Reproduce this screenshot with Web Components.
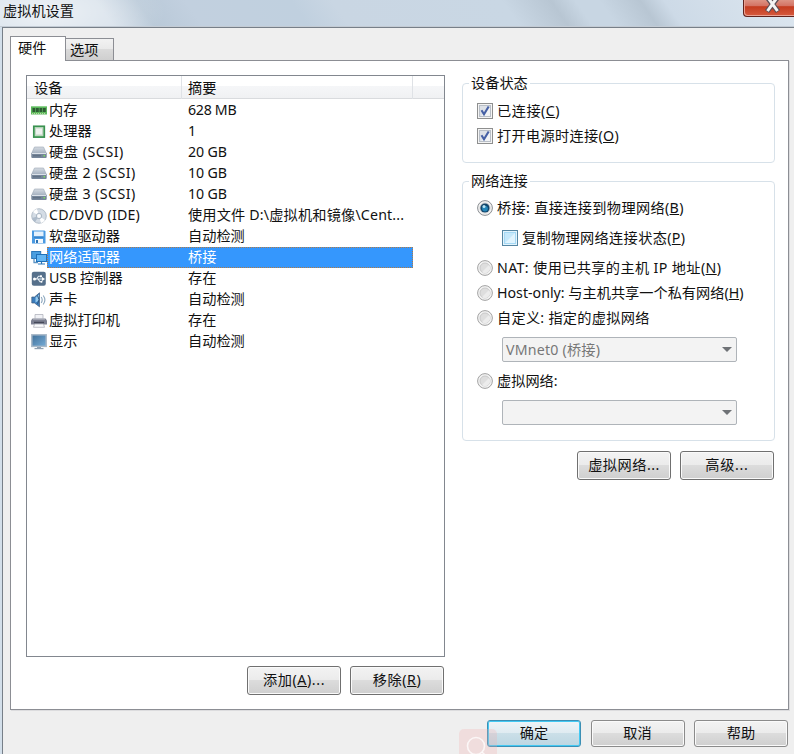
<!DOCTYPE html>
<html lang="zh-CN">
<head>
<meta charset="utf-8">
<title>虚拟机设置</title>
<style>
html,body{margin:0;width:794px;height:754px;overflow:hidden}
body{font:14.2px/20px "Noto Sans","Noto Sans CJK SC",sans-serif;color:#111}
</style>
</head>
<body>
<vm-window></vm-window>
<script>
const define = (name, html, setup) => customElements.define(name, class extends HTMLElement {
  constructor() {
    super();
    this.attachShadow({mode: 'open'});
  }
  connectedCallback() {
    if (this.shadowRoot.childNodes.length) return;
    this.shadowRoot.innerHTML = html;
    if (setup) setup(this, this.shadowRoot);
  }
});

const ICONS = {
  memory: '<rect x="0" y="3" width="16" height="8.500" fill="#5cb85c"/><path d="M0 3h16v1H0z" fill="#8fd28f"/><path d="M1.500 5h2.800v4H1.500zM5 5h2.800v4H5zM8.500 5h2.800v4H8.500zM12 5h2.800v4H12z" fill="#2d5a33"/><path d="M1 10.500h14" stroke="#b9d9a0" stroke-dasharray="1 1"/>',
  cpu: '<rect x="2.800" y="2.300" width="10.500" height="10.800" fill="#b5e0b5" stroke="#3a9150" stroke-width="1.700"/><rect x="4.500" y="4" width="7" height="7" fill="#eef2ee" stroke="#c3d4c5"/>',
  disk: '<defs><linearGradient id="g" x2="0" y2="1"><stop stop-color="#d6dce3"/><stop offset="1" stop-color="#a3afbe"/></linearGradient></defs><path d="M3.500 2h9L15.500 8.500H.5z" fill="url(#g)" stroke="#9aa6b4" stroke-width=".6"/><rect x=".3" y="8" width="15.400" height="5" rx="1" fill="#76869a"/><path d="M1 8.500h14" stroke="#dce2e9"/><path d="M2 10.800h8" stroke="#5b6a7c"/><rect x="12.500" y="10" width="1.500" height="1.500" fill="#7be05a"/>',
  cd: '<circle cx="8" cy="8" r="7.300" fill="#d4dce5" stroke="#a6b2bf" stroke-width=".8"/><path d="M8 8 2 4a7 7 0 0 1 4-3zM8 8l6 4a7 7 0 0 1-4 3z" fill="#fff"/><path d="M8 8 1 10a7 7 0 0 0 3 4z" fill="#aebccb"/><circle cx="8" cy="8" r="2.700" fill="#eef2f6" stroke="#9dabba" stroke-width=".8"/><circle cx="8" cy="8" r="1" fill="#fff"/>',
  floppy: '<path d="M1 1.500h12.500L14.500 2.500v12H1z" fill="#4a9ae2"/><rect x="3" y="2.500" width="9.500" height="5" fill="#e4f1fd"/><path d="M3 7.500h9.500v1H3z" fill="#2273bd"/><rect x="4" y="10" width="8" height="4" fill="#f4f8fc"/><rect x="5" y="11" width="2" height="3" fill="#2c72b2"/>',
  net: '<rect x=".7" y="1.500" width="9" height="7" fill="#4b9fe0" stroke="#2a76b8"/><path d="M3 8.500v4h4" stroke="#5c94c4" stroke-width="1.300" fill="none"/><rect x="5.500" y="4.500" width="10" height="7" fill="#62b5f3" stroke="#1f70b8"/><path d="M10.500 12v2M7 14h7" stroke="#2b78bd" stroke-width="1.200"/>',
  usb: '<rect x=".8" y=".8" width="14" height="14" rx="2" fill="#56708b"/><path d="M3 8h9M5.500 8l2-2.800h2M7 8l2 2.800h1.500" fill="none" stroke="#e8eff6" stroke-width="1.100"/><circle cx="3.500" cy="8" r="1.500" fill="#fff"/><path d="M11 6l3 2-3 2z" fill="#fff"/><rect x="9" y="4.300" width="2" height="2" fill="#fff"/><circle cx="10.500" cy="10.800" r="1" fill="#fff"/>',
  sound: '<path d="M.8 5h2.700L8.500.8v14L3.500 11H.8z" fill="#3b7dbd" stroke="#3f5c7c" stroke-width=".7"/><path d="M4.500 5.500 8 2.500v6l-3.500 2z" fill="#93caf0"/><path d="M6.500 3.500q3 4 0 8.500" fill="none" stroke="#2c5680" stroke-width="1"/><path d="M10.200 5q2 3 0 6M12.200 3.500q3.400 4.500 0 9" fill="none" stroke="#8ba6bd" stroke-width="1.100"/>',
  printer: '<path d="M4 1.500h8V7H4z" fill="#f0f1f5" stroke="#a8abb5" stroke-width=".7"/><path d="M1.500 5.500h13L16 7.500V11.500H0V7.500z" fill="#7c8091"/><path d="M2 6h12" stroke="#c1c4cd"/><path d="M3 9.500h10" stroke="#454959" stroke-width="1.500"/><path d="M3.500 11h9l1 3.300h-11z" fill="#fafbfc" stroke="#a5a8b2" stroke-width=".7"/>',
  display: '<defs><linearGradient id="s" x2="1" y2="1"><stop stop-color="#3f6f98"/><stop offset="1" stop-color="#78aed8"/></linearGradient></defs><rect x=".8" y=".8" width="14.400" height="11.600" fill="url(#s)" stroke="#a9b9c8" stroke-width="1.500"/><path d="M6 13h4v1.500H6z" fill="#8da0b3"/><path d="M3.500 14.600h9" stroke="#8fa0b0" stroke-width="1.200"/>'
};

define('vm-icon', `<style>:host{display:block;width:16px;height:16px;flex:none}svg{display:block}</style><svg width="16" height="16" viewBox="0 0 16 16"></svg>`,
  (h, r) => r.querySelector('svg').innerHTML = ICONS[h.getAttribute('name')]);

define('vm-button', `<style>
:host{display:flex;box-sizing:border-box;width:94px;height:29px;padding-bottom:2px;align-items:center;justify-content:center;border:1px solid #707070;border-radius:3px;box-shadow:inset 0 0 0 1px #fafafa;background:linear-gradient(#f3f3f3,#ebebeb 48%,#dcdcdc 50%,#cfcfcf);white-space:nowrap}
:host([footer]){height:27px;border-color:#8b8b8b}
:host([primary]){border-color:#3c8fb4;box-shadow:inset 0 0 0 1px #43c9f3;background:linear-gradient(#eef4f7,#dfebf1 48%,#cbdfe8 50%,#bcd6e2)}
</style><slot></slot>`);

define('vm-option', `<style>
:host{display:flex;align-items:center;height:25px;gap:4px;padding-left:14px;white-space:nowrap}
:host([indent]){padding-left:39px}
svg{flex:none;display:block;margin-top:-1px}
span{margin-top:-2px}
</style><svg width="16" height="16" viewBox="0 0 16 16"></svg><span><slot></slot></span>`, (h, r) => {
  const on = h.hasAttribute('checked');
  r.querySelector('svg').innerHTML = h.getAttribute('kind') === 'check'
    ? (h.hasAttribute('hot')
      ? '<rect x=".5" y=".5" width="15" height="15" fill="#e3f4fd" stroke="#5586a3"/><rect x="2.500" y="2.500" width="11" height="11" fill="#c5e8fb" stroke="#a5d9f5"/><path d="M13 3v10H3z" fill="#e1f4fe"/>'
      : '<rect x=".5" y=".5" width="15" height="15" fill="#f4f4f4" stroke="#8e8f8f"/><rect x="2.500" y="2.500" width="11" height="11" fill="#dde1e7" stroke="#b9bfc7"/><path d="M13 4v9H4z" fill="#f1f3f5"/>')
      + (on ? '<path d="M4.500 7.300 7 11.300 11.700 3.500" fill="none" stroke="#4660a5" stroke-width="2.100"/>' : '')
    : `<circle cx="8" cy="8" r="7.400" fill="#f2f2f2" stroke="${on ? '#8a8e92' : '#a3a3a3'}"/><circle cx="8" cy="8" r="5" fill="#dedede" stroke="#c9c9c9"/><path d="M12 5a5 5 0 0 1-7 7z" fill="#ececec"/>`
      + (on ? '<circle cx="8" cy="8" r="4.600" fill="#12456a"/><circle cx="8" cy="8.600" r="2.900" fill="#2586b8"/><circle cx="7" cy="6.600" r="1.500" fill="#b9e6f6"/>' : '');
});

define('vm-combo', `<style>
:host{display:flex;box-sizing:border-box;align-items:center;justify-content:space-between;width:235px;height:25px;margin-left:39px;padding:0 4px 0 3px;border:1px solid #afb4b9;border-radius:2px;background:#f3f3f3;color:#777}
i{width:0;height:0;border:5px solid transparent;border-top-color:#6f7276;border-bottom:0}
</style><span><slot></slot></span><i></i>`);

define('vm-group', `<style>
:host{display:block;box-sizing:border-box;width:313px;border:1px solid #d7e1e9;border-radius:4px}
.legend{display:block;width:fit-content;height:18px;line-height:18px;margin:-10px 0 0 6px;padding:0 2px;background:#fff}
</style><div class="legend"></div><slot></slot>`, (h, r) => r.querySelector('.legend').textContent = h.getAttribute('label'));

define('vm-device', `<style>
:host{display:flex;height:21px;align-items:center;width:386px;padding-left:4px;box-sizing:border-box;line-height:20px;white-space:nowrap}
.row{display:grid;grid-template-columns:139px 1fr;flex:1;height:21px;box-sizing:border-box;padding-left:2px}
:host([selected]) .row{background:#3597fd;color:#fff;outline:1px dotted #b07a45;outline-offset:-1px}
</style><vm-icon></vm-icon><div class="row"><slot name="name"></slot><slot name="summary"></slot></div>`, (h, r) =>
  r.querySelector('vm-icon').replaceWith(Object.assign(document.createElement('template'), {innerHTML: `<vm-icon name="${h.getAttribute('icon')}"></vm-icon>`}).content));

// icon, name, summary, letter spacing of name and of summary
const DEVICES = [
  ['memory','内存','628 MB',0,-.3],['cpu','处理器','1'],['disk','硬盘 (SCSI)','20 GB',.55,-.1],['disk','硬盘 2 (SCSI)','10 GB',.45,-.1],['disk','硬盘 3 (SCSI)','10 GB',.45,-.1],
  ['cd','CD/DVD (IDE)','使用文件 D:\\虚拟机和镜像\\Cent...',.17,.17],['floppy','软盘驱动器','自动检测'],['net','网络适配器','桥接'],['usb','USB 控制器','存在'],
  ['sound','声卡','自动检测'],['printer','虚拟打印机','存在'],['display','显示','自动检测']
];

define('vm-device-list', `<style>
:host{display:block;box-sizing:border-box;width:419px;height:582px;border:1px solid #82878f;background:#fff}
.head{display:grid;grid-template-columns:155px 231px 1fr;height:23px;margin-bottom:1px;box-sizing:border-box;border-bottom:1px solid #d9dbde;background:linear-gradient(#fff 45%,#f5f6f8 46%,#f0f1f3);line-height:23px}
.head span{border-right:1px solid #dfe2e6;padding-left:7px}
.head span:nth-child(2){padding-left:6px}
.head span:last-child{border:0}
</style><div class="head"><span>设备</span><span>摘要</span><span></span></div>` +
DEVICES.map(([i, n, s, a = 0, b = 0]) => `<vm-device icon="${i}"${i === 'net' ? ' selected' : ''}><span slot="name" style="letter-spacing:${a}px">${n}</span><span slot="summary" style="letter-spacing:${b}px">${s}</span></vm-device>`).join(''));

define('vm-titlebar', `<style>
:host{display:flex;justify-content:space-between;box-sizing:border-box;height:27px;padding-left:3px;border-bottom:1px solid #c3cbd4;
background:radial-gradient(ellipse 120px 50px at 45px 12px,rgba(255,255,255,.6),rgba(255,255,255,0)),linear-gradient(55deg,#d2dde8 0,#d2dde8 14%,#b9c9d8 19%,#c2d0df 25%,#c0d0df 38%,#c9d6e3 43%,#c9d7e4 64%,#b8c6d3 70%,#c8d6e3 73%,#c8d6e3 76%,#b8c6d3 81%,#cddae7 84%,#dce6ef)}
.title{line-height:22px}
.close{box-sizing:border-box;width:51px;height:17px;border:1px solid #61231d;border-top:0;border-right:0;border-radius:0 0 0 4px;background:linear-gradient(#dc9384,#d47465 35%,#c43c20 42%,#d65a3e);box-shadow:inset 1px -1px #eaa192}
svg{display:block;margin-left:20px}
</style><span class="title">虚拟机设置</span><div class="close"><svg width="18" height="15"><path d="M3-3 14 11.500M14-3 3 11.500" stroke="#5b4f57" stroke-width="5.200"/><path d="M3.500-3 13.500 11M13.500-3 3.500 11" stroke="#f4f4f4" stroke-width="3"/></svg></div>`);

define('vm-tabs', `<style>
:host{display:flex;height:24px;align-items:flex-end}
span{box-sizing:border-box;border:1px solid #8c8e94;border-bottom:0}
.on{width:56px;height:25px;padding-left:7px;background:#fff;margin-bottom:-1px;line-height:22px}
.off{width:48px;height:22px;padding-left:4px;border-left:0;background:linear-gradient(#f2f2f2,#e9e9e9 48%,#dadada 50%,#cfcfcf);line-height:22px}
</style><span class="on">硬件</span><span class="off">选项</span>`);

define('vm-window', `<style>
:host{display:block;width:794px;height:754px;overflow:hidden;background:#d3dfea}
.client{box-sizing:border-box;height:727px;margin-left:2px;border:1px solid #777f88;border-width:1px 0 0 1px;background:#efefef;padding:8px 5px 0 7px}
.page{box-sizing:border-box;width:779px;height:650px;border:1px solid #8c8e94;background:#fff;display:grid;grid-template-columns:419px 313px;gap:17px;padding:14px 0 0 15px;box-shadow:1px 1px #dcdcde}
.actions{display:flex;justify-content:flex-end;gap:9px;margin-right:1px}
.left .actions{margin-top:9px}
.right{padding-top:8px}
.right .actions{margin-top:10px}
vm-group.state{height:80px;margin-bottom:18px}
vm-group.net{height:260px}
.footer{display:flex;justify-content:flex-end;gap:9.500px;margin:10px 1px 0 0;position:relative}
.mark{position:absolute;left:449px;top:9px;width:38px;height:30px;border-radius:5px 5px 0 0;background:rgba(244,170,170,.26)}
.mark svg{display:block}
</style>
<vm-titlebar></vm-titlebar>
<div class="client">
<vm-tabs></vm-tabs>
<div class="page">
<div class="left"><vm-device-list></vm-device-list><div class="actions"><vm-button style="letter-spacing:.6px"><span>添加(<u>A</u>)...</span></vm-button><vm-button style="letter-spacing:.6px"><span>移除(<u>R</u>)</span></vm-button></div></div>
<div class="right">
<vm-group class="state" label="设备状态">
<vm-option kind="check" checked style="margin-top:7px;letter-spacing:.5px">已连接(<u>C</u>)</vm-option>
<vm-option kind="check" checked style="letter-spacing:.3px">打开电源时连接(<u>O</u>)</vm-option>
</vm-group>
<vm-group class="net" label="网络连接">
<vm-option checked style="margin-top:6px;letter-spacing:.34px">桥接: 直接连接到物理网络(<u>B</u>)</vm-option>
<vm-option kind="check" hot indent style="margin:5px 0;letter-spacing:.33px">复制物理网络连接状态(<u>P</u>)</vm-option>
<vm-option style="letter-spacing:.37px">NAT: 使用已共享的主机 IP 地址(<u>N</u>)</vm-option>
<vm-option>Host-only: 与主机共享一个私有网络(<u>H</u>)</vm-option>
<vm-option style="letter-spacing:.27px">自定义: 指定的虚拟网络</vm-option>
<vm-combo style="margin-top:6px;margin-bottom:7px;letter-spacing:.2px">VMnet0 (桥接)</vm-combo>
<vm-option>虚拟网络:</vm-option>
<vm-combo style="margin-top:6px"></vm-combo>
</vm-group>
<div class="actions"><vm-button style="letter-spacing:.5px">虚拟网络...</vm-button><vm-button style="letter-spacing:.7px">高级...</vm-button></div>
</div>
</div>
<div class="footer"><vm-button footer primary>确定</vm-button><vm-button footer>取消</vm-button><vm-button footer>帮助</vm-button>
<div class="mark"><svg width="38" height="30"><circle cx="17" cy="17" r="8.500" fill="none" stroke="#fff" stroke-opacity=".75" stroke-width="1.600"/><path d="M23 23l6 6" stroke="#fff" stroke-opacity=".75" stroke-width="1.600"/></svg></div></div>
</div>`);
</script>
</body>
</html>
